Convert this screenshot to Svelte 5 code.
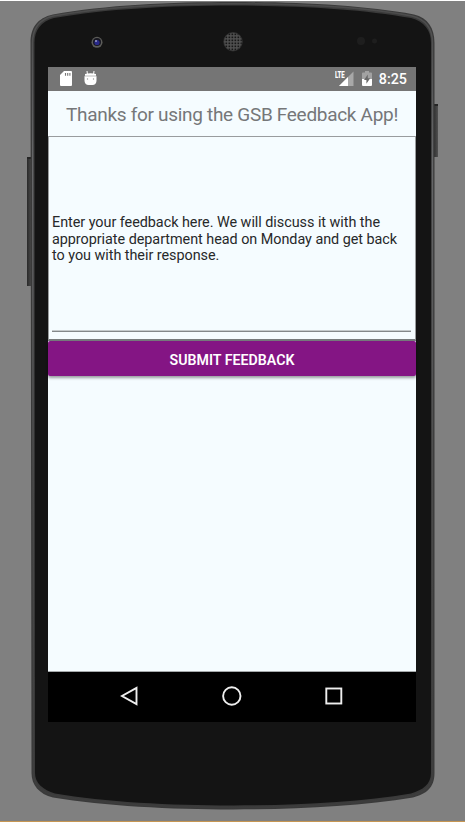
<script>
  const message = 'Enter your feedback here. We will discuss it with the appropriate department head on Monday and get back to you with their response.';
</script>

<div class="stage">
  <svg class="device" width="465" height="822" viewBox="0 0 465 822" aria-hidden="true">
    <defs>
      <pattern id="mesh" width="3" height="3" patternUnits="userSpaceOnUse">
        <rect width="3" height="3" fill="#515151" />
        <rect x="0.500" y="0.500" width="1.700" height="1.700" fill="#171717" />
      </pattern>
      <linearGradient id="rim" x1="0" y1="0" x2="0" y2="1">
        <stop offset="0" stop-color="#4a4a4a" />
        <stop offset="0.2" stop-color="#666769" />
        <stop offset="0.6" stop-color="#4b4b4b" />
        <stop offset="1" stop-color="#3c3c3c" />
      </linearGradient>
      <linearGradient id="key" x1="0" x2="1">
        <stop offset="0" stop-color="#292929" />
        <stop offset="1" stop-color="#505050" />
      </linearGradient>
    </defs>
    <rect x="27" y="157" width="5" height="129" fill="url(#key)" />
    <rect x="27" y="157" width="4" height="2" fill="#252525" />
    <rect x="433" y="104" width="5" height="53" fill="url(#key)" />
    <rect x="434" y="104" width="4" height="2" fill="#252525" />
    <path d="M30.5 43C30.5 28 37 18 53 14.5C105 5 170 2 233 2C296 2 362 5 414 14.5C428 18 434.5 28 434.5 43V773C434.5 788 426 794 413 797.500C360 806 296 809.500 233 809.500C170 809.500 105 806 53 797.500C39 794 31.500 785 31.500 773Z" fill="#3a3a3a" />
    <path d="M32.500 43C32.500 29 39 19.500 53 16C105 6.500 170 3.700 233 3.700C296 3.700 362 6.500 412 16C426 19.500 432.500 29 432.500 43V773C432.500 786 425 792 412 795.500C360 804 296 807.500 233 807.500C170 807.500 105 804 54 795.500C41 792 33.500 784 33.500 773Z" fill="none" stroke="url(#rim)" stroke-width="1.400" />
    <path d="M34.500 43C34.500 30 41 21.500 54 18C105 9 170 5.500 233 5.500C296 5.500 362 9 411 18C424 21.500 431 30 431 43V773C431 784 423 790 411 793.500C360 802 296 805.500 233 805.500C170 805.500 105 802 55 793.500C43 790 35 783 35 773Z" fill="#141414" />
    <circle cx="97" cy="42.300" r="5.500" fill="#5c5c59" />
    <circle cx="97" cy="42" r="4" fill="#171721" />
    <circle cx="97" cy="42.500" r="2.600" fill="#29298a" />
    <circle cx="96" cy="41" r="1" fill="#9a9cc5" />
    <circle cx="233" cy="41.700" r="9.300" fill="url(#mesh)" stroke="#333" stroke-width="0.700" />
    <circle cx="361" cy="41" r="4" fill="#1e1e1e" />
    <circle cx="374.500" cy="41" r="2.500" fill="#1e1e1e" />
  </svg>

  <main class="screen">
    <header class="status">
      <svg class="sd" width="12" height="15" viewBox="0 0 12 15">
        <path d="M4 0H11Q12 0 12 1V14Q12 15 11 15H1Q0 15 0 14V4Z" fill="#fff" />
        <path d="M5.500 2V4.800M7.700 2V4.800M9.900 2V4.800" stroke="#757575" stroke-width="1.100" />
      </svg>
      <svg class="droid" width="13" height="15" viewBox="0 0 13 15">
        <path d="M3 0L3.400 3M10 0L9.600 3" stroke="#fff" stroke-width="1" />
        <path d="M1 3Q6.500 1.500 12 3V4.800H1ZM0.500 5.200H12.500V10Q12 14 8.500 14H4.500Q1 14 0.500 10Z" fill="#fff" />
        <path d="M0.800 5H12.200" stroke="#ddd" stroke-width="0.700" />
        <circle cx="3.500" cy="8" r="0.700" fill="#999" /><circle cx="9.500" cy="8" r="0.700" fill="#999" />
      </svg>
      <span class="grow"></span>
      <div class="signal">
        <span class="lte">LTE</span>
        <svg width="19" height="15" viewBox="0 0 19 15">
          <path d="M4 15L18.500 0.500V15Z" fill="#a8a8a8" />
          <path d="M4 15L13 6V15Z" fill="#fff" />
        </svg>
      </div>
      <svg class="battery" width="10" height="15" viewBox="0 0 10 15">
        <path d="M3 0H7V1.500H9Q10 1.500 10 2.500V8H0V2.500Q0 1.500 1 1.500H3Z" fill="#a2a2a2" />
        <path d="M0 8H10V14Q10 15 9 15H1Q0 15 0 14Z" fill="#fff" />
        <path d="M5.800 3.500L2 9H4.400V12.800L8.200 7.300H5.800Z" fill="#696969" />
      </svg>
      <time>8:25</time>
    </header>

    <h1>Thanks for using the GSB Feedback App!</h1>
    <section class="field">
      <p>{message}</p>
      <div class="underline"></div>
    </section>
    <button>SUBMIT FEEDBACK</button>
    <div class="blank"></div>
    <nav>
      <svg width="22" height="22" viewBox="0 0 22 22"><path d="M18.500 2.900V19.100L4 11Z" /></svg>
      <svg width="22" height="22" viewBox="0 0 22 22"><circle cx="10.800" cy="11" r="8.700" /></svg>
      <svg width="22" height="22" viewBox="0 0 22 22"><rect x="3.300" y="3.500" width="15" height="15" /></svg>
    </nav>
  </main>
</div>

<style>
  :global(body) { margin: 0; overflow: hidden; }
  .stage {
    box-sizing: border-box;
    display: grid;
    width: 465px;
    height: 822px;
    padding: 66px 49px 99px 48px;
    background: #808080;
    border-top: 1px solid #fff;
    border-bottom: 1px solid #c69653;
    position: relative;
    font-family: Roboto, sans-serif;
  }
  .device { position: absolute; left: 0; top: -1px; clip-path: inset(1px 0); }
  .screen {
    position: relative;
    display: flex;
    flex-direction: column;
    width: 368px;
    height: 655px;
    background: #f5fcff;
  }
  .status {
    box-sizing: border-box;
    flex: none;
    display: flex;
    align-items: flex-start;
    height: 24px;
    padding: 4px 9px 0 12px;
    background: #757575;
    color: #fff;
  }
  .droid { margin-left: 12px; }
  .grow { flex: 1; }
  .signal { position: relative; width: 19px; height: 15px; }
  .signal svg { display: block; }
  .lte {
    position: absolute;
    left: 0;
    top: 0;
    font: 900 9.500px/8px Roboto, sans-serif;
    transform: scaleX(0.64);
    transform-origin: left;
    letter-spacing: -0.200px;
  }
  .battery { margin: 0 7px 0 8px; }
  time { font-size: 14.300px; font-weight: 500; line-height: 17px; }
  h1 {
    box-sizing: border-box;
    flex: none;
    height: 45px;
    margin: 0;
    font-size: 19px;
    letter-spacing: -0.300px;
    line-height: 48px;
    font-weight: 400;
    text-align: center;
    color: #757779;
    white-space: nowrap;
  }
  .field {
    box-sizing: border-box;
    flex: none;
    display: flex;
    flex-direction: column;
    height: 205px;
    padding: 78px 4px 7px 3px;
    border: solid #999c9e;
    border-width: 1px 1px 2px;
    border-bottom-color: #777b7d;
  }
  p {
    margin: 0;
    font-size: 14.400px;
    letter-spacing: -0.040px;
    line-height: 16.700px;
    color: #27292a;
  }
  .underline { height: 1px; margin-top: auto; background: #83888a; box-shadow: 0 -1px #c5cbcd; }
  button {
    flex: none;
    height: 35px;
    padding: 1px 0 0;
    border: 0;
    border-radius: 2px;
    background: #841584;
    color: #fff;
    font: 600 14.200px/36px Roboto, sans-serif;
    box-shadow: 0 2px 3px rgb(0 0 0 / 38%);
  }
  .blank { flex: 1; }
  nav {
    box-sizing: border-box;
    flex: none;
    display: flex;
    justify-content: space-between;
    align-items: center;
    height: 51px;
    padding: 0 71px 2px 70px;
    background: #000;
    border-top: 1px solid #a5a9ab;
  }
  nav svg { fill: none; stroke: #eee; stroke-width: 1.900; }
</style>
